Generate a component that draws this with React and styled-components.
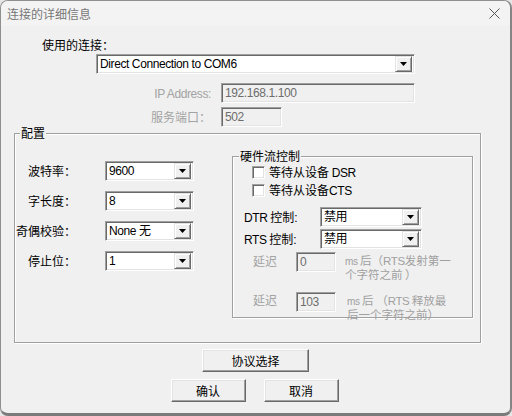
import React from 'react';
import styled, { createGlobalStyle } from 'styled-components';

const CJK = `"Noto Sans CJK SC", "Liberation Sans", sans-serif`;
const LATIN = `"Liberation Sans", "Noto Sans CJK SC", sans-serif`;

const GlobalStyle = createGlobalStyle`
  html, body {
    margin: 0;
    padding: 0;
    background: #e6e6e6;
  }
`;

const Window = styled.div`
  box-sizing: border-box;
  width: 512px;
  height: 416px;
  display: flex;
  flex-direction: column;
  background: #f0f0f0;
  border: 1px solid #8f8f8f;
  border-right: 2px solid #858585;
  border-bottom: 3px solid #7b7b7b;
  border-radius: 8px;
  overflow: hidden;
  font-family: ${CJK};
  font-size: 12px;
  color: #000;
`;

const TitleBar = styled.div`
  height: 25px;
  flex: none;
  display: flex;
  align-items: center;
  justify-content: space-between;
  padding: 0 10px 0 6px;
  background: #f3f3f3;
`;

const Title = styled.span`
  color: #777;
  font-size: 12px;
  line-height: 14px;
`;

const CloseIcon = styled.svg`
  display: block;
  margin-top: -1px;
`;

const Body = styled.div`
  flex: 1;
  display: flex;
  flex-direction: column;
  align-items: flex-start;
`;

const Latin = styled.span`
  font-family: ${LATIN};
  font-size: ${p => p.$size || 12}px;
  letter-spacing: -0.4px;
`;

const SectionLabel = styled.div`
  margin: 12px 0 0 41px;
  line-height: 14px;
`;

const Indent = styled.div`
  margin: ${p => p.$mt}px 0 0 ${p => p.$ml}px;
`;

const FieldRow = styled.div`
  display: grid;
  grid-template-columns: ${p => p.$cols};
  column-gap: ${p => p.$gap}px;
  align-items: ${p => p.$align || 'center'};
  margin: ${p => p.$mt}px 0 0 ${p => p.$ml || 0}px;
`;

const FieldLabel = styled.span`
  text-align: ${p => (p.$right ? 'right' : 'left')};
  color: ${p => (p.$disabled ? '#a3a3a3' : '#000')};
  line-height: ${p => p.$lh || 14}px;
  padding-top: ${p => p.$pt || 0}px;
  white-space: nowrap;
`;

const Sunken = styled.div`
  box-sizing: border-box;
  display: flex;
  align-items: center;
  width: ${p => p.$w}px;
  height: 20px;
  padding: 2px;
  border: 1px solid;
  border-color: #a0a0a0 #fff #fff #a0a0a0;
  box-shadow: inset 1px 1px 0 #696969, inset -1px -1px 0 #e3e3e3;
  background: ${p => (p.$disabled ? '#f0f0f0' : '#fff')};
`;

const FieldText = styled.span`
  flex: 1;
  padding-left: 1px;
  font-family: ${LATIN};
  font-size: 12px;
  letter-spacing: -0.4px;
  line-height: 16px;
  color: ${p => (p.$disabled ? '#6d6d6d' : '#000')};
  white-space: nowrap;
  overflow: hidden;
`;

const DropButton = styled.span`
  box-sizing: border-box;
  width: 17px;
  height: 16px;
  flex: none;
  display: flex;
  align-items: center;
  justify-content: center;
  border: 1px solid;
  border-color: #e3e3e3 #696969 #696969 #e3e3e3;
  box-shadow: inset 1px 1px 0 #fff, inset -1px -1px 0 #a0a0a0;
  background: #f0f0f0;
`;

const Group = styled.div`
  position: relative;
  box-sizing: border-box;
  flex: none;
  display: flex;
  flex-direction: ${p => p.$dir || 'row'};
  align-items: flex-start;
  width: ${p => p.$w}px;
  height: ${p => p.$h}px;
  margin: ${p => p.$mt}px 0 0 ${p => p.$ml}px;
  border: 1px solid #a0a0a0;
  box-shadow: inset 1px 1px 0 #fff, 1px 1px 0 #fff;
`;

const Caption = styled.span`
  position: absolute;
  top: -8px;
  left: ${p => p.$left}px;
  padding: 0 1px;
  line-height: 14px;
  background: #f0f0f0;
`;

const SettingsGrid = styled.div`
  display: grid;
  grid-template-columns: 61px 89px;
  column-gap: 29px;
  row-gap: 10px;
  align-items: center;
  margin-top: 27px;
`;

const CheckList = styled.div`
  display: flex;
  flex-direction: column;
  gap: 5px;
  margin: 9px 0 0 19px;
`;

const CheckRow = styled.label`
  display: flex;
  align-items: center;
  gap: 4px;
  height: 13px;
  line-height: 13px;
`;

const CheckBox = styled.span`
  box-sizing: border-box;
  width: 13px;
  height: 13px;
  border: 1px solid;
  border-color: #a0a0a0 #fff #fff #a0a0a0;
  box-shadow: inset 1px 1px 0 #696969, inset -1px -1px 0 #e3e3e3;
  background: #fff;
`;

const Note = styled.div`
  color: #a0a0a0;
  font-size: 11.5px;
  line-height: 13px;
  padding: 2px 0 0 ${p => p.$indent || 0}px;
  white-space: nowrap;
`;

const ButtonRow = styled.div`
  align-self: center;
  display: flex;
  gap: ${p => p.$gap || 0}px;
  margin: ${p => p.$mt}px ${p => p.$shift || 0}px 0 0;
`;

const PushButton = styled.button`
  box-sizing: border-box;
  width: ${p => p.$w}px;
  height: 23px;
  padding: 0;
  background: #f0f0f0;
  border: 1px solid;
  border-color: #fff #696969 #696969 #fff;
  box-shadow: inset -1px -1px 0 #a0a0a0, inset 1px 1px 0 #e3e3e3;
  font-family: ${CJK};
  font-size: 12px;
  color: #000;
`;

const Arrow = () => (
  <svg width="7" height="4" viewBox="0 0 7 4">
    <polygon points="0,0 7,0 3.5,4" fill="#000" />
  </svg>
);

function Combo({ w, children }) {
  return (
    <Sunken $w={w}>
      <FieldText>{children}</FieldText>
      <DropButton>
        <Arrow />
      </DropButton>
    </Sunken>
  );
}

function Edit({ w, children }) {
  return (
    <Sunken $w={w} $disabled>
      <FieldText $disabled>{children}</FieldText>
    </Sunken>
  );
}

const settings = [
  ['波特率：', '9600'],
  ['字长度：', '8'],
  ['奇偶校验：', 'None 无'],
  ['停止位：', '1'],
];

export default function App() {
  return (
    <>
      <GlobalStyle />
      <Window>
        <TitleBar>
          <Title>连接的详细信息</Title>
          <CloseIcon width="11" height="11" viewBox="0 0 11 11">
            <path d="M0.5 0.5 L10.5 10.5 M10.5 0.5 L0.5 10.5" stroke="#555" strokeWidth="1" fill="none" />
          </CloseIcon>
        </TitleBar>

        <Body>
          <SectionLabel>使用的连接：</SectionLabel>
          <Indent $mt={2} $ml={95}>
            <Combo w={319}>Direct Connection to COM6</Combo>
          </Indent>

          <FieldRow $cols="120px auto" $gap={10} $mt={9} $ml={90}>
            <FieldLabel $right $disabled>
              <Latin>IP Address:</Latin>
            </FieldLabel>
            <Edit w={194}>192.168.1.100</Edit>
          </FieldRow>
          <FieldRow $cols="120px auto" $gap={10} $mt={4} $ml={90}>
            <FieldLabel $right $disabled>服务端口：</FieldLabel>
            <Edit w={61}>502</Edit>
          </FieldRow>

          <Group $w={467} $h={210} $mt={6} $ml={13}>
            <Caption $left={5}>配置</Caption>
            <SettingsGrid>
              {settings.map(([label, value]) => (
                <React.Fragment key={label}>
                  <FieldLabel $right>{label}</FieldLabel>
                  <Combo w={89}>{value}</Combo>
                </React.Fragment>
              ))}
            </SettingsGrid>

            <Group $dir="column" $w={241} $h={162} $mt={22} $ml={38}>
              <Caption $left={6}>硬件流控制</Caption>
              <CheckList>
                <CheckRow>
                  <CheckBox />
                  <span>
                    等待从设备 <Latin>DSR</Latin>
                  </span>
                </CheckRow>
                <CheckRow>
                  <CheckBox />
                  <span>
                    等待从设备<Latin>CTS</Latin>
                  </span>
                </CheckRow>
              </CheckList>

              <FieldRow $cols="76px 102px" $gap={0} $mt={10} $ml={11}>
                <FieldLabel>
                  <Latin>DTR</Latin> 控制<Latin>:</Latin>
                </FieldLabel>
                <Combo w={102}>禁用</Combo>
              </FieldRow>
              <FieldRow $cols="76px 102px" $gap={0} $mt={2} $ml={11}>
                <FieldLabel>
                  <Latin>RTS</Latin> 控制<Latin>:</Latin>
                </FieldLabel>
                <Combo w={102}>禁用</Combo>
              </FieldRow>

              <FieldRow $cols="43px 40px auto" $gap={0} $align="start" $mt={3} $ml={20}>
                <FieldLabel $disabled $lh={12} $pt={3}>延迟</FieldLabel>
                <Edit w={40}>0</Edit>
                <Note $indent={9}>
                  <Latin $size={10}>ms</Latin> 后（<Latin $size={11.5}>RTS</Latin>发射第一
                  <br />
                  个字符之前 ）
                </Note>
              </FieldRow>
              <FieldRow $cols="43px 40px auto" $gap={0} $align="start" $mt={11} $ml={20}>
                <FieldLabel $disabled $lh={12} $pt={2}>延迟</FieldLabel>
                <Edit w={40}>103</Edit>
                <Note $indent={11}>
                  <Latin $size={10}>ms</Latin> 后 （<Latin $size={11.5}>RTS</Latin> 释放最
                  <br />
                  后一个字符之前）
                </Note>
              </FieldRow>
            </Group>
          </Group>

          <ButtonRow $mt={6}>
            <PushButton $w={107}>协议选择</PushButton>
          </ButtonRow>
          <ButtonRow $mt={7} $gap={18} $shift={2}>
            <PushButton $w={75}>确认</PushButton>
            <PushButton $w={75}>取消</PushButton>
          </ButtonRow>
        </Body>
      </Window>
    </>
  );
}
